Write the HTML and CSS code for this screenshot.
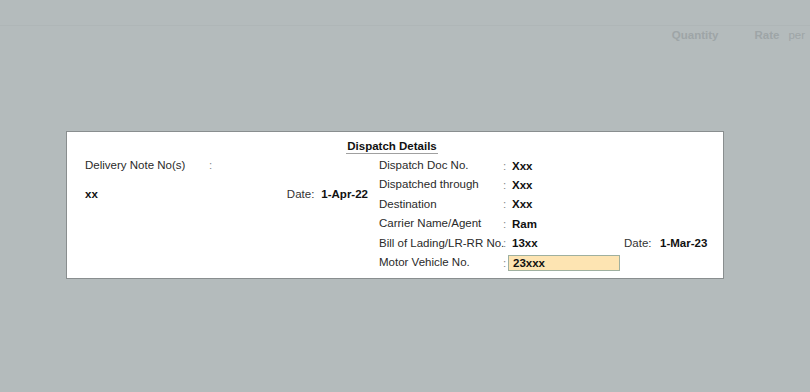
FILE: index.html
```html
<!DOCTYPE html>
<html lang="en">
  <head>
    <meta charset="UTF-8" />
    <meta name="viewport" content="width=device-width, initial-scale=1.0" />
    <title>Dispatch Details</title>
    <link rel="stylesheet" href="styles.css">
  </head>

  <body>
    <div id="screen">
      <div class="columns-head">
        <span class="col-qty">Quantity</span>
        <span class="col-rate">Rate</span>
        <span class="col-per">per</span>
      </div>

      <div id="dispatch-panel">
        <div class="panel-title"><span>Dispatch Details</span></div>
        <div class="panel-body">
          <div class="delivery">
            <div class="field">
              <span class="label">Delivery Note No(s)</span>
              <span class="colon">:</span>
            </div>
            <div class="delivery-line">
              <span class="value">xx</span>
              <span class="date-group">
                <span class="date-label">Date:</span>
                <span class="value">1-Apr-22</span>
              </span>
            </div>
          </div>

          <div class="dispatch">
            <span class="label">Dispatch Doc No.</span>
            <span class="colon">:</span>
            <span class="value">Xxx</span>
            <span></span><span></span>

            <span class="label">Dispatched through</span>
            <span class="colon">:</span>
            <span class="value">Xxx</span>
            <span></span><span></span>

            <span class="label">Destination</span>
            <span class="colon">:</span>
            <span class="value">Xxx</span>
            <span></span><span></span>

            <span class="label">Carrier Name/Agent</span>
            <span class="colon">:</span>
            <span class="value">Ram</span>
            <span></span><span></span>

            <span class="label">Bill of Lading/LR-RR No.</span>
            <span class="colon">:</span>
            <span class="value">13xx</span>
            <span class="date-label">Date:</span>
            <span class="value">1-Mar-23</span>

            <span class="label">Motor Vehicle No.</span>
            <span class="colon">:</span>
            <span class="value active-input">23xxx</span>
            <span></span><span></span>
          </div>
        </div>
      </div>
    </div>
  </body>
</html>
```

FILE: styles.css
```css
body {
  margin: 0;
  background-color: #b4bbbc;
  font-family: "Liberation Sans", Arial, sans-serif;
  font-size: 11.5px;
  color: #2a2a2a;
}

#screen {
  width: 810px;
  height: 392px;
  overflow: hidden;
}

.columns-head {
  margin-top: 25px;
  border-top: 1px solid #afb6b7;
  height: 18px;
  display: flex;
  justify-content: flex-end;
  align-items: center;
  padding-right: 5px;
  color: #9ea5a7;
  font-weight: bold;
}

.col-qty {
  margin-right: 36px;
}

.col-rate {
  margin-right: 9px;
}

.col-per {
  font-weight: normal;
}

#dispatch-panel {
  box-sizing: border-box;
  margin-top: 87px;
  margin-left: 66px;
  width: 658px;
  height: 148px;
  background-color: #fff;
  border: 1px solid #898e8f;
}

.panel-title {
  padding-top: 7px;
  padding-right: 6px;
  text-align: center;
}

.panel-title span {
  display: inline-block;
  padding: 0 1px;
  line-height: 14px;
  font-weight: bold;
  color: #111;
  border-bottom: 1px solid #a0a0a0;
}

.panel-body {
  display: grid;
  grid-template-columns: 301px 1fr;
  column-gap: 11px;
  margin-top: 2px;
}

.delivery {
  padding-left: 18px;
}

.field {
  display: flex;
  line-height: 19.4px;
}

.label {
  width: 124px;
  line-height: 19.4px;
  white-space: nowrap;
}

.colon {
  color: #888;
}

.value {
  font-weight: bold;
  color: #111;
}

.delivery-line {
  display: flex;
  justify-content: space-between;
  margin-top: 9.7px;
  line-height: 19.4px;
}

.date-group {
  display: flex;
  gap: 7px;
}

.date-label {
  color: #333;
}

.dispatch {
  display: grid;
  grid-template-columns: 124px 5px 112px 36px auto;
  grid-auto-rows: 19.4px;
  align-items: center;
}

.dispatch .value {
  padding-left: 4px;
}

.dispatch .date-label {
  padding-left: 4px;
}

.active-input {
  box-sizing: border-box;
  height: 16px;
  line-height: 14px;
  padding-left: 3px;
  background-color: #fde4b2;
  border: 1px solid #9fb09f;
}
```
